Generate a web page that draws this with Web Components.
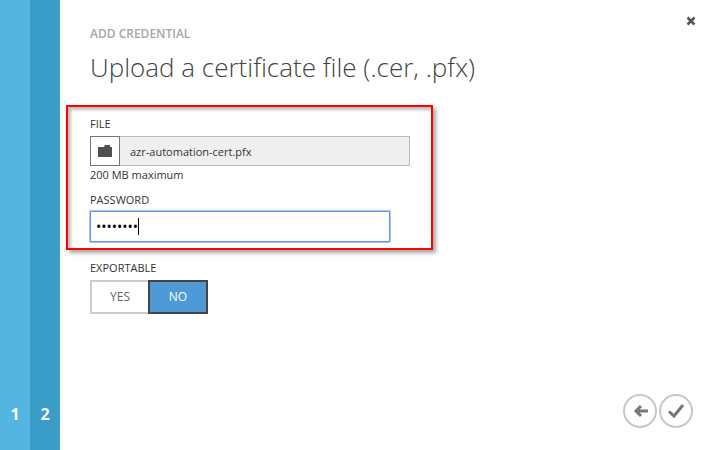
<!DOCTYPE html>
<html lang="en">
<head>
<meta charset="utf-8">
<meta name="viewport" content="width=device-width, initial-scale=1">
<title>Add Credential</title>
<style>
  body {
    margin: 0;
    background: #fff;
    color: #333;
    font: 12px/16px "Open Sans", "Noto Sans", sans-serif;
  }
</style>
</head>
<body>

<template id="wizard-dialog">
  <style>
    :host {
      display: flex;
      min-height: 100vh;
    }
    .page {
      flex: 1;
      display: flex;
      flex-direction: column;
      min-width: 0;
      box-sizing: border-box;
      padding: 12px 17px 22px 30px;
    }
    header {
      display: flex;
      justify-content: space-between;
      align-items: flex-start;
    }
    .eyebrow {
      margin: 14px 0 0;
      font-size: 12px;
      line-height: 16px;
      font-weight: 600;
      color: #a6a6a6;
    }
    h1 {
      margin: 6px 0 0;
      font-size: 26px;
      line-height: 38px;
      font-weight: 300;
      color: #444;
    }
    .close {
      display: flex;
      margin: 0 -8px 0 0;
      padding: 4px 5px;
      border: 0;
      background: none;
    }
    main {
      flex: 1;
      margin-top: 19px;
    }
    footer {
      display: flex;
      justify-content: flex-end;
      gap: 2px;
    }
  </style>
  <slot name="steps"></slot>
  <div class="page">
    <header>
      <div>
        <p class="eyebrow"><slot name="eyebrow"></slot></p>
        <h1><slot name="title"></slot></h1>
      </div>
      <button class="close" type="button" aria-label="Close">
        <svg width="10" height="10" viewBox="0 0 10 10"><path d="M1.500 1.500l7 7M8.500 1.500l-7 7" stroke="#555" stroke-width="2.500"/></svg>
      </button>
    </header>
    <main><slot></slot></main>
    <footer><slot name="actions"></slot></footer>
  </div>
</template>

<template id="wizard-steps">
  <style>
    :host { display: flex; }
    a {
      display: flex;
      align-items: flex-end;
      justify-content: center;
      box-sizing: border-box;
      width: 30px;
      padding-bottom: 24px;
      background: #54b5e0;
      color: #fff;
      font-size: 16px;
      line-height: 24px;
      font-weight: 700;
      text-decoration: none;
    }
    a.current { background: #3a9dc8; }
  </style>
</template>

<template id="callout-box">
  <style>
    :host {
      display: block;
      box-sizing: border-box;
      max-width: 367px;
      margin-left: -24px;
      padding: 9px 21px 6px 22px;
      border: 2px solid #f00;
      box-shadow: 3px 3px 4px rgba(0, 0, 0, .35), inset 3px 3px 3px rgba(0, 0, 0, .25);
    }
  </style>
  <slot></slot>
</template>

<template id="file-field">
  <style>
    :host { display: block; }
    label {
      display: block;
      margin-bottom: 4px;
      font-size: 11px;
    }
    .row { display: flex; }
    button {
      display: flex;
      align-items: center;
      justify-content: center;
      width: 30px;
      height: 30px;
      padding: 0;
      border: 1px solid #777;
      background: #fff;
    }
    input {
      flex: 1;
      min-width: 0;
      box-sizing: border-box;
      height: 30px;
      padding: 0 10px;
      border: 1px solid #bbb;
      border-left: 0;
      border-radius: 0;
      background: #efefef;
      color: #333;
      font: inherit;
      font-size: 11px;
      font-weight: 500;
      outline: 0;
    }
    small {
      display: block;
      margin-top: 1px;
      font-size: 11px;
    }
  </style>
  <label for="file"></label>
  <div class="row">
    <button type="button" aria-label="Browse">
      <svg width="14" height="12" viewBox="0 0 14 12"><path d="M0 2h6l1-2h5v2h2v10H0z" fill="#505050"/></svg>
    </button>
    <input id="file" type="text" readonly>
  </div>
  <small><slot></slot></small>
</template>

<template id="password-field">
  <style>
    :host {
      display: block;
      margin-top: 9px;
    }
    label {
      display: block;
      margin-bottom: 3px;
      font-size: 11px;
    }
    .box {
      position: relative;
      max-width: 300px;
    }
    input {
      display: block;
      box-sizing: border-box;
      width: 100%;
      height: 31px;
      padding: 0 5px;
      border: 1px solid #6a93d8;
      border-radius: 1px;
      box-shadow: 0 0 0 1px #a9c5f3;
      background: #fff;
      color: #000;
      font: inherit;
      font-size: 14px;
      outline: 0;
      caret-color: transparent;
    }
    /* text cursor, held steady after the last bullet */
    .caret {
      position: absolute;
      top: 7px;
      left: 48px;
      width: 1px;
      height: 17px;
      background: #000;
    }
  </style>
  <label for="password"></label>
  <div class="box">
    <input id="password" type="password">
    <span class="caret"></span>
  </div>
</template>

<template id="toggle-field">
  <style>
    :host {
      display: block;
      margin-top: 10px;
    }
    fieldset {
      min-width: 0;
      margin: 0;
      padding: 0;
      border: 0;
    }
    legend {
      padding: 0;
      margin-bottom: 4px;
      font-size: 11px;
    }
    .options { display: flex; }
    label {
      position: relative;
      box-sizing: border-box;
      width: 60px;
      padding: 7px 0;
      border: 2px solid #ccc;
      background: #fff;
      color: #666;
      font-size: 12px;
      text-align: center;
    }
    label + label { margin-left: -2px; }
    label:has(:checked) {
      border-color: #444;
      background: #4d9ad6;
      color: #fff;
    }
    input {
      position: absolute;
      inset: 0;
      margin: 0;
      opacity: 0;
    }
  </style>
  <fieldset>
    <legend></legend>
    <div class="options">
      <label><input type="radio" name="toggle" value="yes">YES</label>
      <label><input type="radio" name="toggle" value="no">NO</label>
    </div>
  </fieldset>
</template>

<template id="round-button">
  <style>
    :host { display: block; }
    button {
      display: block;
      width: 34px;
      height: 34px;
      padding: 0;
      border: 2px solid #c8c8c8;
      border-radius: 50%;
      background: #fff;
    }
    svg { display: block; }
    path {
      fill: none;
      stroke: #777;
      stroke-width: 3;
    }
  </style>
  <button type="button">
    <svg width="30" height="30" viewBox="0 0 30 30"><path/></svg>
  </button>
</template>

<wizard-dialog>
  <wizard-steps slot="steps" count="2" current="2"></wizard-steps>
  <span slot="eyebrow">ADD CREDENTIAL</span>
  <span slot="title">Upload a certificate file (.cer, .pfx)</span>
  <callout-box>
    <file-field label="FILE" value="azr-automation-cert.pfx">200 MB maximum</file-field>
    <password-field label="PASSWORD" value="password"></password-field>
  </callout-box>
  <toggle-field label="EXPORTABLE" value="no"></toggle-field>
  <round-button slot="actions" icon="back" label="Back"></round-button>
  <round-button slot="actions" icon="check" label="Complete"></round-button>
</wizard-dialog>

<script>
  class BaseElement extends HTMLElement {
    constructor() {
      super();
      const template = document.getElementById(this.localName);
      this.attachShadow({mode: 'open'}).appendChild(template.content.cloneNode(true));
    }
    $(selector) {
      return this.shadowRoot.querySelector(selector);
    }
  }

  class WizardDialog extends BaseElement {}

  class CalloutBox extends BaseElement {}

  class WizardSteps extends BaseElement {
    connectedCallback() {
      const current = Number(this.getAttribute('current'));
      for (let i = 1; i <= Number(this.getAttribute('count')); i++) {
        const step = document.createElement('a');
        step.href = `#step-${i}`;
        step.textContent = i;
        step.classList.toggle('current', i === current);
        this.shadowRoot.appendChild(step);
      }
    }
  }

  // shared by the file and password fields
  class TextField extends BaseElement {
    connectedCallback() {
      this.$('label').textContent = this.getAttribute('label');
      this.$('input').value = this.getAttribute('value');
    }
  }

  class FileField extends TextField {}

  class PasswordField extends TextField {
    connectedCallback() {
      super.connectedCallback();
      this.$('input').addEventListener('input', () => {
        this.$('.caret').hidden = true;
        this.$('input').style.caretColor = 'auto';
      });
    }
  }

  class ToggleField extends BaseElement {
    connectedCallback() {
      this.$('legend').textContent = this.getAttribute('label');
      this.$(`input[value=${this.getAttribute('value')}]`).checked = true;
    }
  }

  const ICONS = {
    back: 'M23 15H11M16 10L11 15l5 5',
    check: 'M8 15.500l5 4.500l9-11'
  };

  class RoundButton extends BaseElement {
    connectedCallback() {
      this.$('button').setAttribute('aria-label', this.getAttribute('label'));
      this.$('path').setAttribute('d', ICONS[this.getAttribute('icon')]);
    }
  }

  customElements.define('wizard-dialog', WizardDialog);
  customElements.define('wizard-steps', WizardSteps);
  customElements.define('callout-box', CalloutBox);
  customElements.define('file-field', FileField);
  customElements.define('password-field', PasswordField);
  customElements.define('toggle-field', ToggleField);
  customElements.define('round-button', RoundButton);
</script>
</body>
</html>
